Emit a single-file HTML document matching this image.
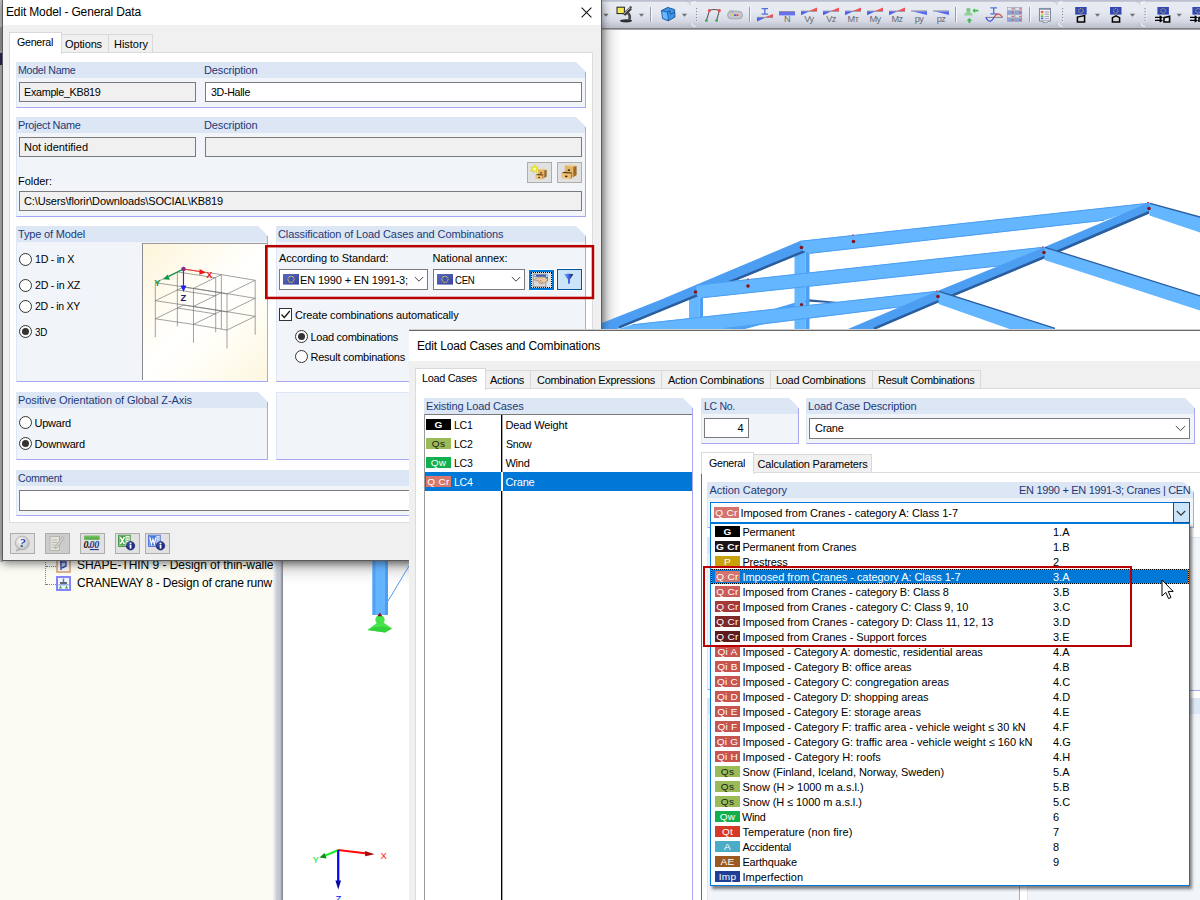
<!DOCTYPE html>
<html><head><meta charset="utf-8"><title>Edit Model</title>
<style>
html,body{margin:0;padding:0;}
body{width:1200px;height:900px;overflow:hidden;position:relative;background:#fff;font-family:"Liberation Sans",sans-serif;font-size:11px;}
.t{position:absolute;white-space:pre;font-family:"Liberation Sans",sans-serif;}
div{box-sizing:content-box}
</style></head><body>
<div style="position:absolute;left:0px;top:0px;width:273px;height:900px;background:#fbfbf4"></div>
<div style="position:absolute;left:0px;top:0px;width:3px;height:562px;background:#b8b8bc"></div>
<div style="position:absolute;left:0px;top:0px;width:2px;height:27px;background:#d0d0d4"></div>
<div style="position:absolute;left:0px;top:27px;width:2px;height:23px;background:#a4a4ac"></div>
<div style="position:absolute;left:0px;top:53px;width:2px;height:12px;background:#2c2c5c"></div>
<div style="position:absolute;left:0px;top:65px;width:2px;height:497px;background:#c4c4c8"></div>
<div style="position:absolute;left:45px;top:558px;width:1px;height:27px;border-left:1px dotted #808080;width:0"></div>
<div style="position:absolute;left:46px;top:566px;width:10px;height:0px;border-top:1px dotted #808080"></div>
<div style="position:absolute;left:46px;top:584px;width:10px;height:0px;border-top:1px dotted #808080"></div>
<div style="position:absolute;left:56px;top:558px;width:11px;height:11px;border:2px solid #dcb48c;background:#f4f4f4"></div>
<svg style="position:absolute;left:58px;top:560px" width="11" height="11" viewBox="0 0 11 11"><path d="M3 1 L3 10 M2 2 L8 2 L8 6 L4 8" stroke="#3848a8" stroke-width="1.4" fill="#c0c8e0"/></svg>
<div style="position:absolute;left:56px;top:576px;width:11px;height:11px;border:2px solid #8484fc;background:#f4f6fc"></div>
<svg style="position:absolute;left:58px;top:578px" width="11" height="11" viewBox="0 0 11 11"><path d="M5.5 0.5V4" stroke="#5878c8" stroke-width="1.5"/><rect x="2" y="4" width="7" height="2.2" fill="#606878"/><rect x="0.5" y="6.2" width="10" height="1.3" fill="#88a8e0"/><path d="M1 10.5 L2.5 7.8 L4 10.5Z M7 10.5 L8.5 7.8 L10 10.5Z" fill="#30a040"/></svg>
<span class="t" style="left:77px;top:557.0px;font-size:12px;line-height:16px;color:#000;font-weight:normal;letter-spacing:-0.045px;width:196px;overflow:hidden;">SHAPE-THIN 9 - Design of thin-walle</span>
<span class="t" style="left:77px;top:575.0px;font-size:12px;line-height:16px;color:#000;font-weight:normal;letter-spacing:-0.208px;">CRANEWAY 8 - Design of crane runw</span>
<div style="position:absolute;left:273px;top:0px;width:10px;height:900px;background:linear-gradient(90deg,#f2f2f0 0,#e2e5ec 18%,#c6cbd7 38%,#bec4d0 72%,#94969c 90%,#7c7c80 100%)"></div>
<div style="position:absolute;left:283px;top:0px;width:130px;height:900px;background:#fff"></div>
<div style="position:absolute;left:283px;top:561px;width:127px;height:24px;background:linear-gradient(180deg,#c4c4c4 0,#e0e0e0 28%,#f4f4f4 62%,#fff 100%)"></div>
<svg style="position:absolute;left:283px;top:555px" width="130" height="345" viewBox="283 555 130 345">
<rect x="372.5" y="555" width="15.5" height="60" fill="#64b4ff"/><rect x="372.5" y="555" width="3" height="60" fill="#50a2f4"/><rect x="385" y="555" width="3" height="60" fill="#4c9ef2"/>
<path d="M388 601 L409 566" stroke="#4c9cf0" stroke-width="1" fill="none"/>
<path d="M367.5 630 L377.5 622.5 L383.5 622.5 L392 628.5 L385 632.6 Z" fill="#48e44c"/>
<path d="M367.5 630 L385 632.6 L392 628.5 L384 626.6 L373 627.2Z" fill="#34d23c"/>
<circle cx="380" cy="619.8" r="4.7" fill="#44e448"/>
<path d="M379.8 612.4 L377.4 616.2 L382.2 616.2Z" fill="#8c1010"/>
<!-- axes -->
<path d="M338 850 L367 853.4" stroke="#ff0808" stroke-width="2"/><path d="M374.6 854.2 L365 851 L365.2 856.2Z" fill="#a80808"/>
<path d="M338.5 850 L325 855.6" stroke="#10f020" stroke-width="2"/><path d="M319.4 857.6 L324.6 853 L326.6 858.4Z" fill="#089010"/>
<path d="M338.2 850 L338.2 881" stroke="#0808ff" stroke-width="2.3"/><path d="M338.2 889.6 L335.4 880.4 L341 880.4Z" fill="#0808a8"/>
</svg>
<span class="t" style="left:380.4px;top:849.0px;font-size:9.5px;line-height:14px;color:#ff1010;font-weight:normal;">X</span>
<span class="t" style="left:312.6px;top:853.0px;font-size:9.5px;line-height:14px;color:#10e820;font-weight:normal;">Y</span>
<span class="t" style="left:335.6px;top:892.2px;font-size:9.5px;line-height:14px;color:#1010ff;font-weight:normal;">Z</span>
<div style="position:absolute;left:600px;top:0px;width:600px;height:28px;background:linear-gradient(180deg,#b8bccb 0,#c4c8d5 5%,#e9ebf3 9%,#e6e9f1 40%,#d6dae5 75%,#b9bdcc 100%)"></div>
<div style="position:absolute;left:600px;top:28px;width:600px;height:1px;background:#7e7e82"></div>
<div style="position:absolute;left:600px;top:29px;width:600px;height:1px;background:#a4a4a8"></div>
<div style="position:absolute;left:600px;top:30px;width:600px;height:299px;background:#fff"></div>
<div style="position:absolute;left:600px;top:30px;width:22px;height:299px;background:linear-gradient(90deg,#8a8a8a 0,#8a8a8a 8%,#c6c6c6 9%,#e2e2e2 35%,#f4f4f4 65%,#fff 100%)"></div>
<svg style="position:absolute;left:600px;top:30px" width="600" height="299" viewBox="600 30 600 299">
<!-- back elements -->
<path d="M775 308.5 L806 299.5 L808 302 L782 311Z" fill="#4c9ef3"/>
<path d="M806 299 L838 302 L838 303.5 L806 301.5Z" fill="#2c5e9e"/>
<path d="M724 329 L760 322 L764 324 L745 329Z" fill="#4c9ef3"/>
<!-- columns -->
<rect x="794.5" y="250" width="11" height="80" fill="#64b6ff"/><rect x="805.5" y="250" width="4" height="80" fill="#4c9ef3"/>
<rect x="689" y="294" width="10.5" height="36" fill="#64b6ff"/><rect x="699.5" y="294" width="3.5" height="36" fill="#4c9ef3"/>
<!-- rafter A -->
<path d="M594 329 L596 325.3 L660 300 L800 241 L806 244 L806 251.5 L620 328 L616 329.5Z" fill="#4c9ef3"/>
<path d="M619 327.4 L806 250.6" stroke="#2c5e9e" stroke-width="2.4" fill="none"/>
<!-- purlins -->
<path d="M800 241 L1148 203 L1150 205 L1104 220.5 L810 253.5 L803 251Z" fill="#64b6ff"/>
<path d="M800 241.3 L1148 203.3" stroke="#4c9ef3" stroke-width="1"/>
<path d="M810 253.3 L1104 220.3" stroke="#4c9ef3" stroke-width="1"/>
<path d="M696 285 L1043 247 L1044 249.5 L1000 266 L702 298 L697 296Z" fill="#64b6ff"/>
<path d="M696 285.3 L1043 247.3" stroke="#4c9ef3" stroke-width="1"/>
<path d="M702 297.8 L1000 265.8" stroke="#4c9ef3" stroke-width="1"/>
<path d="M618 329 L632.5 324.5 L937 291 L938 293.5 L913 305.5 L725 329Z" fill="#64b6ff"/>
<path d="M632.5 324.8 L937 291.3" stroke="#4c9ef3" stroke-width="1"/>
<path d="M725 328.4 L913 305.3" stroke="#4c9ef3" stroke-width="1"/>
<!-- rafter 2 -->
<path d="M848 329 L937.5 291 L1044 247.3 L1149 202.5 L1151 205 L1149 213.5 L1044 258.5 L937.5 302.7 L876 329Z" fill="#4c9ef3"/>
<path d="M874 328.6 L937.5 301.6 L1044 257.2 L1149 212.3" stroke="#2c5e9e" stroke-width="2.6" fill="none"/>
<!-- right slope beams -->
<path d="M1149.5 203 L1200 217 L1200 232.5 L1149.5 215.5Z" fill="#64b6ff"/>
<path d="M1150 203.3 L1200 217" stroke="#2c5e9e" stroke-width="1.3"/>
<path d="M1044.5 247 L1200 296 L1200 310.5 L1044.5 260Z" fill="#64b6ff"/>
<path d="M1045 247.3 L1200 296" stroke="#2c5e9e" stroke-width="1.3"/>
<path d="M938.5 291 L1054.5 328 L1054.5 329.5 L1011 329.5 L938.5 304Z" fill="#64b6ff"/>
<path d="M939 291.3 L1055 328.3" stroke="#2c5e9e" stroke-width="1.3"/>
<!-- nodes -->
<g fill="#8c1018"><circle cx="801.5" cy="247.5" r="1.8"/><circle cx="853.5" cy="241.5" r="1.8"/><circle cx="748" cy="286" r="1.8"/><circle cx="695.5" cy="292" r="1.8"/><circle cx="801.5" cy="304.5" r="1.6"/><circle cx="1149" cy="208.5" r="1.8"/><circle cx="1044" cy="252.5" r="1.8"/><circle cx="938" cy="296.5" r="1.8"/></g>
<g fill="#e03030"><rect x="852" y="234.5" width="2" height="1"/><rect x="747" y="278.5" width="2" height="1"/><rect x="1147" y="202" width="2" height="1"/><rect x="1042" y="246.5" width="2" height="1"/><rect x="936" y="290.5" width="2" height="1"/></g>
</svg>
<svg style="position:absolute;left:600px;top:0" width="600" height="28" viewBox="600 0 600 28"><path d="M603.4 13.8 L608.6 13.8 L606 16.8Z" fill="#6e6e72"/><rect x="617" y="7.2" width="7.4" height="6.4" fill="#f4e858" stroke="#202020" stroke-width="1"/><path d="M622.3 14 L629.4 7.2 L631.8 9.6 L625.4 15.8Z" fill="#3a3a3e"/><path d="M628.2 11.6 Q632.2 14.6 630.8 19.8 L627.8 19.8 Q629.6 15.4 626.4 13.6Z" fill="#4a4a4e"/><ellipse cx="626" cy="20.8" rx="6.2" ry="1.6" fill="#2e2e32"/><rect x="629.4" y="6.4" width="2.6" height="2" transform="rotate(45 630.7 7.4)" fill="#55555a"/><path d="M623.5 14.2 L630 7.8" stroke="#c8c8cc" stroke-width="1"/><path d="M638.9 13.8 L644.1 13.8 L641.5 16.8Z" fill="#6e6e72"/><rect x="650" y="7" width="1" height="15" fill="#9a9ca4"/><rect x="651" y="7" width="1" height="15" fill="#f6f7fa"/><path d="M661.5 10.6 L667.8 7.4 L674.6 9.6 L675 17 L668.4 20.8 L662.6 18.6Z" fill="#3c94e8" stroke="#185090" stroke-width=".9"/><path d="M661.5 10.6 L667.4 12.2 L668.4 20.8 M667.4 12.2 L669.6 10.6 L670.2 14.2 L675 12.4" stroke="#185090" stroke-width=".8" fill="none"/><path d="M662.2 11.4 L667 12.8 L667.8 19.8 L663 18Z" fill="#68b8ff"/><path d="M681.9 13.8 L687.1 13.8 L684.5 16.8Z" fill="#6e6e72"/><path d="M686.5 1.5 Q690.5 1.5 690.5 5 M690.5 23 Q690.5 26.5 686.5 26.5" stroke="#b8bcc8" stroke-width="1" fill="none" opacity=".8"/><path d="M695.5 1.5 Q691.5 1.5 691.5 5 M691.5 23 Q691.5 26.5 695.5 26.5" stroke="#f8f9fc" stroke-width="1" fill="none"/><rect x="696" y="8" width="2" height="2" fill="#f8f8fc"/><rect x="696" y="8" width="1.3" height="1.3" fill="#8c90a0"/><rect x="696" y="11" width="2" height="2" fill="#f8f8fc"/><rect x="696" y="11" width="1.3" height="1.3" fill="#8c90a0"/><rect x="696" y="14" width="2" height="2" fill="#f8f8fc"/><rect x="696" y="14" width="1.3" height="1.3" fill="#8c90a0"/><rect x="696" y="17" width="2" height="2" fill="#f8f8fc"/><rect x="696" y="17" width="1.3" height="1.3" fill="#8c90a0"/><rect x="696" y="20" width="2" height="2" fill="#f8f8fc"/><rect x="696" y="20" width="1.3" height="1.3" fill="#8c90a0"/><path d="M706.4 20.6 L709.4 10.6 Q713 8.6 719.4 10.4 L716.6 20.6" stroke="#5a5a60" stroke-width="1.1" fill="none"/><circle cx="709.4" cy="10.4" r="1.5" fill="#e84848"/><circle cx="719.4" cy="10.4" r="1.5" fill="#e84848"/><rect x="705" y="19.6" width="2.8" height="2" fill="#30b040"/><rect x="715.2" y="19.6" width="2.8" height="2" fill="#30b040"/><rect x="727.6" y="11.2" width="14.8" height="7.6" rx="3.6" fill="#c4c6cc" stroke="#9a9ca4" stroke-width=".8"/><rect x="729" y="10.4" width="5" height="2.4" fill="#b0b2ba"/><rect x="731.6" y="14.4" width="2" height="1.6" fill="#f0d030"/><rect x="734" y="14.4" width="2" height="1.6" fill="#4060e0"/><rect x="736.4" y="14.4" width="2" height="1.6" fill="#e04040"/><rect x="749" y="7" width="1" height="15" fill="#9a9ca4"/><rect x="750" y="7" width="1" height="15" fill="#f6f7fa"/><path d="M761.6 8.6 H768 M761.6 14.2 H768 M764.8 8.6 V14.2" stroke="#5070d8" stroke-width="1.3"/><path d="M757 17.4 L773 17.4" stroke="#888890" stroke-width=".9"/><path d="M765 17.2 L773 14 L773 17.2Z" fill="#f05058"/><path d="M757 17.8 L765 17.8 L757 21.6Z" fill="#5060f0"/><rect x="779" y="11" width="16" height="4.4" fill="#6870f0"/><rect x="779" y="11" width="16" height="1" fill="#9090a0"/><text x="787" y="22.2" text-anchor="middle" font-family="Liberation Sans" font-size="9.2" fill="#666a72" letter-spacing="-0.5">N</text><path d="M801 11.2 L817 11.2" stroke="#808088" stroke-width="1"/><path d="M809 11 L817 7.4 L817 11Z" fill="#f05058"/><path d="M801 11.6 L809 11.6 L801 15.2Z" fill="#5060f0"/><text x="809" y="22.2" text-anchor="middle" font-family="Liberation Sans" font-size="9.2" fill="#666a72" letter-spacing="-0.5">Vy</text><path d="M823 11.2 L839 11.2" stroke="#808088" stroke-width="1"/><path d="M831 11 L839 7.4 L839 11Z" fill="#f05058"/><path d="M823 11.6 L831 11.6 L823 15.2Z" fill="#5060f0"/><text x="831" y="22.2" text-anchor="middle" font-family="Liberation Sans" font-size="9.2" fill="#666a72" letter-spacing="-0.5">Vz</text><path d="M845 11.2 L861 11.2" stroke="#808088" stroke-width="1"/><path d="M853 11 L861 7.4 L861 11Z" fill="#f05058"/><path d="M845 11.6 L853 11.6 L845 15.2Z" fill="#5060f0"/><text x="853" y="22.2" text-anchor="middle" font-family="Liberation Sans" font-size="9.2" fill="#666a72" letter-spacing="-0.5">Mᴛ</text><path d="M867 11.2 L883 11.2" stroke="#808088" stroke-width="1"/><path d="M875 11 L883 7.4 L883 11Z" fill="#f05058"/><path d="M867 11.6 L875 11.6 L867 15.2Z" fill="#5060f0"/><text x="875" y="22.2" text-anchor="middle" font-family="Liberation Sans" font-size="9.2" fill="#666a72" letter-spacing="-0.5">My</text><path d="M889 11.2 L905 11.2" stroke="#808088" stroke-width="1"/><path d="M897 11 L905 7.4 L905 11Z" fill="#f05058"/><path d="M889 11.6 L897 11.6 L889 15.2Z" fill="#5060f0"/><text x="897" y="22.2" text-anchor="middle" font-family="Liberation Sans" font-size="9.2" fill="#666a72" letter-spacing="-0.5">Mz</text><path d="M911 11 L927 11" stroke="#808088" stroke-width="1"/><path d="M913 11.6 L927 11.6 L927 15Z" fill="#5868f0"/><text x="919" y="22.2" text-anchor="middle" font-family="Liberation Sans" font-size="9.2" fill="#666a72" letter-spacing="-0.5">py</text><path d="M933 11 L949 11" stroke="#808088" stroke-width="1"/><path d="M935 11.6 L949 11.6 L949 15Z" fill="#5868f0"/><text x="941" y="22.2" text-anchor="middle" font-family="Liberation Sans" font-size="9.2" fill="#666a72" letter-spacing="-0.5">pz</text><rect x="955" y="7" width="1" height="15" fill="#9a9ca4"/><rect x="956" y="7" width="1" height="15" fill="#f6f7fa"/><circle cx="968.4" cy="10" r="2.2" fill="#80c888"/><path d="M964.2 15.6 Q964.4 11.8 968.4 12 Q972.4 11.8 972.6 15.6Z" fill="#90d098"/><path d="M972.4 10.6 L975 8.2 L975 9.8 L978.4 9.8 L978.4 11.6 L975 11.6 L975 13.2Z" fill="#40b850"/><path d="M969.4 18 L972.2 20.8 L970.4 20.8 L970.4 23 L968.4 23 L968.4 20.8 L966.6 20.8Z" fill="#40b850"/><path d="M990.4 7.8 H997 M990.4 13.8 H997 M993.7 7.8 V13.8" stroke="#5070d8" stroke-width="1.3"/><path d="M985.6 17.4 H1002.6" stroke="#70707a" stroke-width=".9"/><path d="M985.8 17.6 Q989.8 25 994 17.6" stroke="#3050e0" stroke-width="1.1" fill="none"/><path d="M994 17.2 Q998.2 10.6 1002.4 17.2" stroke="#e03838" stroke-width="1.1" fill="none"/><rect x="1007.4" y="7.4" width="6.8" height="3" fill="#dfe3ee" stroke="#8a8e9c" stroke-width=".5"/><rect x="1011.5" y="8.4" width="2.4" height="1" fill="#e05050"/><rect x="1015.0" y="7.4" width="6.8" height="3" fill="#dfe3ee" stroke="#8a8e9c" stroke-width=".5"/><rect x="1019.1" y="8.4" width="2.4" height="1" fill="#e05050"/><rect x="1007.4" y="11.100000000000001" width="6.8" height="3" fill="#88a4e8" stroke="#8a8e9c" stroke-width=".5"/><rect x="1011.5" y="12.100000000000001" width="2.4" height="1" fill="#e05050"/><rect x="1015.0" y="11.100000000000001" width="6.8" height="3" fill="#88a4e8" stroke="#8a8e9c" stroke-width=".5"/><rect x="1019.1" y="12.100000000000001" width="2.4" height="1" fill="#e05050"/><rect x="1007.4" y="14.8" width="6.8" height="3" fill="#dfe3ee" stroke="#8a8e9c" stroke-width=".5"/><rect x="1011.5" y="15.8" width="2.4" height="1" fill="#e05050"/><rect x="1015.0" y="14.8" width="6.8" height="3" fill="#dfe3ee" stroke="#8a8e9c" stroke-width=".5"/><rect x="1019.1" y="15.8" width="2.4" height="1" fill="#e05050"/><rect x="1007.4" y="18.5" width="6.8" height="3" fill="#88a4e8" stroke="#8a8e9c" stroke-width=".5"/><rect x="1011.5" y="19.5" width="2.4" height="1" fill="#e05050"/><rect x="1015.0" y="18.5" width="6.8" height="3" fill="#88a4e8" stroke="#8a8e9c" stroke-width=".5"/><rect x="1019.1" y="19.5" width="2.4" height="1" fill="#e05050"/><rect x="1029" y="7" width="1" height="15" fill="#9a9ca4"/><rect x="1030" y="7" width="1" height="15" fill="#f6f7fa"/><rect x="1039.4" y="8.4" width="11" height="12.6" fill="#f2f3f8" stroke="#70788c" stroke-width=".9"/><rect x="1039.4" y="8" width="11" height="1.8" fill="#8890a8"/><rect x="1040.8" y="11" width="2.6" height="1.8" fill="#e05050"/><rect x="1040.8" y="13.2" width="2.6" height="1.8" fill="#e8d040"/><rect x="1040.8" y="15.4" width="2.6" height="1.8" fill="#50b850"/><rect x="1040.8" y="17.6" width="2.6" height="1.8" fill="#5070e0"/><path d="M1044.6 12 H1049 M1044.6 14.2 H1049 M1044.6 16.4 H1049 M1044.6 18.6 H1049" stroke="#8088a0" stroke-width=".8"/><path d="M1043 21 L1043 22.6 L1047 22.6 L1049 21" fill="#d8dae4" stroke="#70788c" stroke-width=".6"/><path d="M1053.5 1.5 Q1057.5 1.5 1057.5 5 M1057.5 23 Q1057.5 26.5 1053.5 26.5" stroke="#b8bcc8" stroke-width="1" fill="none" opacity=".8"/><path d="M1062.5 1.5 Q1058.5 1.5 1058.5 5 M1058.5 23 Q1058.5 26.5 1062.5 26.5" stroke="#f8f9fc" stroke-width="1" fill="none"/><rect x="1062" y="8" width="2" height="2" fill="#f8f8fc"/><rect x="1062" y="8" width="1.3" height="1.3" fill="#8c90a0"/><rect x="1062" y="11" width="2" height="2" fill="#f8f8fc"/><rect x="1062" y="11" width="1.3" height="1.3" fill="#8c90a0"/><rect x="1062" y="14" width="2" height="2" fill="#f8f8fc"/><rect x="1062" y="14" width="1.3" height="1.3" fill="#8c90a0"/><rect x="1062" y="17" width="2" height="2" fill="#f8f8fc"/><rect x="1062" y="17" width="1.3" height="1.3" fill="#8c90a0"/><rect x="1062" y="20" width="2" height="2" fill="#f8f8fc"/><rect x="1062" y="20" width="1.3" height="1.3" fill="#8c90a0"/><rect x="1075.2" y="7" width="11.5" height="7.6" fill="#3248b4"/><circle cx="1080.95" cy="10.8" r="2.3" fill="none" stroke="#e8d048" stroke-width=".9" stroke-dasharray="1 .8"/><path d="M1077.4 22 L1077.4 17 L1084.6 15.6 L1084.6 22Z" fill="#d8d8dc" stroke="#000" stroke-width="1.5"/><path d="M1094.9 13.8 L1100.1 13.8 L1097.5 16.8Z" fill="#6e6e72"/><rect x="1110" y="7" width="11.5" height="7.6" fill="#3248b4"/><circle cx="1115.75" cy="10.8" r="2.3" fill="none" stroke="#e8d048" stroke-width=".9" stroke-dasharray="1 .8"/><path d="M1112.4 22 L1112.4 17.6 L1116 15.8 L1119.6 17.6 L1119.6 22Z" fill="#d8d8dc" stroke="#000" stroke-width="1.5"/><path d="M1129.9 13.8 L1135.1 13.8 L1132.5 16.8Z" fill="#6e6e72"/><path d="M1136 1.5 Q1140 1.5 1140 5 M1140 23 Q1140 26.5 1136 26.5" stroke="#b8bcc8" stroke-width="1" fill="none" opacity=".8"/><path d="M1145 1.5 Q1141 1.5 1141 5 M1141 23 Q1141 26.5 1145 26.5" stroke="#f8f9fc" stroke-width="1" fill="none"/><rect x="1144.4" y="8" width="2" height="2" fill="#f8f8fc"/><rect x="1144.4" y="8" width="1.3" height="1.3" fill="#8c90a0"/><rect x="1144.4" y="11" width="2" height="2" fill="#f8f8fc"/><rect x="1144.4" y="11" width="1.3" height="1.3" fill="#8c90a0"/><rect x="1144.4" y="14" width="2" height="2" fill="#f8f8fc"/><rect x="1144.4" y="14" width="1.3" height="1.3" fill="#8c90a0"/><rect x="1144.4" y="17" width="2" height="2" fill="#f8f8fc"/><rect x="1144.4" y="17" width="1.3" height="1.3" fill="#8c90a0"/><rect x="1144.4" y="20" width="2" height="2" fill="#f8f8fc"/><rect x="1144.4" y="20" width="1.3" height="1.3" fill="#8c90a0"/><rect x="1157.4" y="7" width="11.5" height="7.6" fill="#3248b4"/><circle cx="1163.15" cy="10.8" r="2.3" fill="none" stroke="#e8d048" stroke-width=".9" stroke-dasharray="1 .8"/><path d="M1155 17.4 H1161 M1155 20.4 H1161 M1159.6 15.8 L1162 17.4 L1159.6 19 M1159.6 18.8 L1162 20.4 L1159.6 22" stroke="#000" stroke-width="1.1" fill="none"/><path d="M1164 22 L1164 17.6 L1169.6 16.2 L1169.6 22Z" fill="#e8e8ec" stroke="#000" stroke-width="1.6"/><path d="M1176.6000000000001 13.8 L1181.8 13.8 L1179.2 16.8Z" fill="#6e6e72"/><rect x="1192.4" y="7" width="11.5" height="7.6" fill="#3248b4"/><circle cx="1198.15" cy="10.8" r="2.3" fill="none" stroke="#e8d048" stroke-width=".9" stroke-dasharray="1 .8"/><path d="M1190 17.4 H1196 M1190 20.4 H1196 M1194.6 15.8 L1197 17.4 L1194.6 19 M1194.6 18.8 L1197 20.4 L1194.6 22" stroke="#000" stroke-width="1.1" fill="none"/><path d="M1199 22 L1199 17.6 L1204 16.2" fill="none" stroke="#000" stroke-width="1.6"/></svg>
<div style="position:absolute;left:3px;top:0px;width:598px;height:560px;background:#f0f0f0;box-shadow:0 2px 9px 1px rgba(0,0,0,.55)"></div>
<div style="position:absolute;left:2px;top:0px;width:1px;height:561px;background:#5a5a5a"></div>
<div style="position:absolute;left:2px;top:560px;width:600px;height:1px;background:#5a5a5a"></div>
<div style="position:absolute;left:601px;top:0px;width:1px;height:561px;background:#5e5e5e"></div>
<div style="position:absolute;left:3px;top:0px;width:598px;height:25px;background:#fff"></div>
<span class="t" style="left:6px;top:4.0px;font-size:12px;line-height:16px;color:#000;font-weight:normal;letter-spacing:-0.149px;">Edit Model - General Data</span>
<svg style="position:absolute;left:580.5px;top:6.5px" width="11" height="11" viewBox="0 0 11 11"><path d="M0.6 0.6 L10.4 10.4 M10.4 0.6 L0.6 10.4" stroke="#111" stroke-width="1.05"/></svg>
<div style="position:absolute;left:9px;top:52px;width:582px;height:469px;background:#fff;border:1px solid #dcdcdc"></div>
<div style="position:absolute;left:61px;top:34px;width:46px;height:17px;background:#f0f0f0;border:1px solid #d9d9d9;border-bottom:none"></div>
<div style="position:absolute;left:108px;top:34px;width:43px;height:17px;background:#f0f0f0;border:1px solid #d9d9d9;border-bottom:none"></div>
<div style="position:absolute;left:9px;top:32px;width:51px;height:21px;background:#fff;border:1px solid #d9d9d9;border-bottom:none"></div>
<span class="t" style="left:17px;top:34.7px;font-size:11px;line-height:14px;color:#000;font-weight:normal;letter-spacing:-0.300px;transform:scaleX(0.9719);transform-origin:0 50%;">General</span>
<span class="t" style="left:65px;top:37.0px;font-size:11px;line-height:14px;color:#000;font-weight:normal;letter-spacing:-0.132px;">Options</span>
<span class="t" style="left:114px;top:37.0px;font-size:11px;line-height:14px;color:#000;font-weight:normal;letter-spacing:-0.033px;">History</span>
<div style="position:absolute;left:16px;top:62px;width:570px;height:16px;background:#dce6f4;clip-path:polygon(0 0,560px 0,570px 10px,570px 16px,0 16px)"></div>
<div style="position:absolute;left:16px;top:78px;width:568px;height:29px;background:#f1f5fa;border-left:1px solid #dce6f4;border-right:1px solid #a8a8f2;border-bottom:1px solid #a8a8f2"></div>
<div style="position:absolute;left:585px;top:72px;width:1px;height:6px;background:#a8a8f2"></div>
<span class="t" style="left:18px;top:63.0px;font-size:11px;line-height:14px;color:#1c3a78;font-weight:normal;letter-spacing:-0.300px;transform:scaleX(0.9687);transform-origin:0 50%;">Model Name</span>
<span class="t" style="left:204px;top:63.0px;font-size:11px;line-height:14px;color:#1c3a78;font-weight:normal;letter-spacing:-0.139px;">Description</span>
<div style="position:absolute;left:19px;top:82px;width:175px;height:18px;background:#f0f0f0;border:1px solid #7a7a7a"></div>
<div style="position:absolute;left:205px;top:82px;width:375px;height:18px;background:#fff;border:1px solid #7a7a7a"></div>
<span class="t" style="left:24px;top:85.0px;font-size:11px;line-height:14px;color:#000;font-weight:normal;letter-spacing:-0.300px;transform:scaleX(0.9801);transform-origin:0 50%;">Example_KB819</span>
<span class="t" style="left:211px;top:85.0px;font-size:11px;line-height:14px;color:#000;font-weight:normal;letter-spacing:-0.300px;transform:scaleX(0.9654);transform-origin:0 50%;">3D-Halle</span>
<div style="position:absolute;left:16px;top:117px;width:570px;height:16px;background:#dce6f4;clip-path:polygon(0 0,560px 0,570px 10px,570px 16px,0 16px)"></div>
<div style="position:absolute;left:16px;top:133px;width:568px;height:83px;background:#f1f5fa;border-left:1px solid #dce6f4;border-right:1px solid #a8a8f2;border-bottom:1px solid #a8a8f2"></div>
<div style="position:absolute;left:585px;top:127px;width:1px;height:6px;background:#a8a8f2"></div>
<span class="t" style="left:18px;top:118.0px;font-size:11px;line-height:14px;color:#1c3a78;font-weight:normal;letter-spacing:-0.300px;transform:scaleX(0.9914);transform-origin:0 50%;">Project Name</span>
<span class="t" style="left:204px;top:118.0px;font-size:11px;line-height:14px;color:#1c3a78;font-weight:normal;letter-spacing:-0.139px;">Description</span>
<div style="position:absolute;left:19px;top:137px;width:175px;height:18px;background:#f0f0f0;border:1px solid #7a7a7a"></div>
<div style="position:absolute;left:205px;top:137px;width:375px;height:18px;background:#f0f0f0;border:1px solid #7a7a7a"></div>
<span class="t" style="left:24px;top:140.0px;font-size:11px;line-height:14px;color:#000;font-weight:normal;letter-spacing:-0.016px;">Not identified</span>
<span class="t" style="left:18px;top:174.0px;font-size:11px;line-height:14px;color:#000;font-weight:normal;letter-spacing:-0.036px;">Folder:</span>
<div style="position:absolute;left:527px;top:162px;width:23px;height:19px;background:#e1e1e1;border:1px solid #adadad"></div>
<div style="position:absolute;left:557px;top:162px;width:23px;height:19px;background:#e1e1e1;border:1px solid #adadad"></div>
<div style="position:absolute;left:19px;top:191px;width:561px;height:18px;background:#f0f0f0;border:1px solid #7a7a7a"></div>
<span class="t" style="left:24px;top:194.0px;font-size:11px;line-height:14px;color:#000;font-weight:normal;letter-spacing:-0.137px;">C:\Users\florir\Downloads\SOCIAL\KB819</span>
<div style="position:absolute;left:16px;top:226px;width:252px;height:16px;background:#dce6f4;clip-path:polygon(0 0,242px 0,252px 10px,252px 16px,0 16px)"></div>
<div style="position:absolute;left:16px;top:242px;width:250px;height:139px;background:#f1f5fa;border-left:1px solid #dce6f4;border-right:1px solid #a8a8f2;border-bottom:1px solid #a8a8f2"></div>
<div style="position:absolute;left:267px;top:236px;width:1px;height:6px;background:#a8a8f2"></div>
<span class="t" style="left:18px;top:227.0px;font-size:11px;line-height:14px;color:#1c3a78;font-weight:normal;letter-spacing:-0.161px;">Type of Model</span>
<div style="position:absolute;left:18.5px;top:252.5px;width:12px;height:12px;border-radius:50%;border:1px solid #333;background:#fff;box-sizing:content-box;width:11px;height:11px"></div>
<span class="t" style="left:35px;top:252.0px;font-size:11px;line-height:14px;color:#000;font-weight:normal;letter-spacing:-0.300px;transform:scaleX(0.9726);transform-origin:0 50%;">1D - in X</span>
<div style="position:absolute;left:18.5px;top:278.5px;width:12px;height:12px;border-radius:50%;border:1px solid #333;background:#fff;box-sizing:content-box;width:11px;height:11px"></div>
<span class="t" style="left:35px;top:278.0px;font-size:11px;line-height:14px;color:#000;font-weight:normal;letter-spacing:-0.300px;transform:scaleX(0.9674);transform-origin:0 50%;">2D - in XZ</span>
<div style="position:absolute;left:18.5px;top:299.5px;width:12px;height:12px;border-radius:50%;border:1px solid #333;background:#fff;box-sizing:content-box;width:11px;height:11px"></div>
<span class="t" style="left:35px;top:299.0px;font-size:11px;line-height:14px;color:#000;font-weight:normal;letter-spacing:-0.300px;transform:scaleX(0.9546);transform-origin:0 50%;">2D - in XY</span>
<div style="position:absolute;left:18.5px;top:325.0px;width:12px;height:12px;border-radius:50%;border:1px solid #333;background:#fff;box-sizing:content-box;width:11px;height:11px"></div>
<div style="position:absolute;left:21.5px;top:328.0px;width:7px;height:7px;border-radius:50%;background:#333"></div>
<span class="t" style="left:35px;top:324.5px;font-size:11px;line-height:14px;color:#000;font-weight:normal;letter-spacing:-0.300px;transform:scaleX(0.8914);transform-origin:0 50%;">3D</span>
<div style="position:absolute;left:142px;top:243px;width:124px;height:136px;background:linear-gradient(135deg,#fdf5da 0%,#fffcf0 30%,#ffffff 50%,#fffdf4 70%,#fdf7e0 100%);border-left:1px solid #8a8a8a;border-top:1px solid #9a9a9a"></div>
<div style="position:absolute;left:16px;top:392px;width:252px;height:16px;background:#dce6f4;clip-path:polygon(0 0,242px 0,252px 10px,252px 16px,0 16px)"></div>
<div style="position:absolute;left:16px;top:408px;width:250px;height:51px;background:#f1f5fa;border-left:1px solid #dce6f4;border-right:1px solid #a8a8f2;border-bottom:1px solid #a8a8f2"></div>
<div style="position:absolute;left:267px;top:402px;width:1px;height:6px;background:#a8a8f2"></div>
<span class="t" style="left:18px;top:393.0px;font-size:11px;line-height:14px;color:#1c3a78;font-weight:normal;letter-spacing:-0.073px;">Positive Orientation of Global Z-Axis</span>
<div style="position:absolute;left:18.5px;top:416.0px;width:12px;height:12px;border-radius:50%;border:1px solid #333;background:#fff;box-sizing:content-box;width:11px;height:11px"></div>
<span class="t" style="left:34.5px;top:416.0px;font-size:11px;line-height:14px;color:#000;font-weight:normal;letter-spacing:-0.234px;">Upward</span>
<div style="position:absolute;left:18.5px;top:437.0px;width:12px;height:12px;border-radius:50%;border:1px solid #333;background:#fff;box-sizing:content-box;width:11px;height:11px"></div>
<div style="position:absolute;left:21.5px;top:440.0px;width:7px;height:7px;border-radius:50%;background:#333"></div>
<span class="t" style="left:34.5px;top:437.0px;font-size:11px;line-height:14px;color:#000;font-weight:normal;letter-spacing:-0.184px;">Downward</span>
<div style="position:absolute;left:276px;top:226px;width:310px;height:16px;background:#dce6f4;clip-path:polygon(0 0,300px 0,310px 10px,310px 16px,0 16px)"></div>
<div style="position:absolute;left:276px;top:242px;width:308px;height:139px;background:#f1f5fa;border-left:1px solid #dce6f4;border-right:1px solid #a8a8f2;border-bottom:1px solid #a8a8f2"></div>
<div style="position:absolute;left:585px;top:236px;width:1px;height:6px;background:#a8a8f2"></div>
<span class="t" style="left:278px;top:227.0px;font-size:11px;line-height:14px;color:#1c3a78;font-weight:normal;letter-spacing:-0.112px;">Classification of Load Cases and Combinations</span>
<span class="t" style="left:279px;top:251.0px;font-size:11px;line-height:14px;color:#000;font-weight:normal;letter-spacing:-0.109px;">According to Standard:</span>
<span class="t" style="left:432.5px;top:251.0px;font-size:11px;line-height:14px;color:#000;font-weight:normal;letter-spacing:-0.097px;">National annex:</span>
<div style="position:absolute;left:279px;top:269px;width:147px;height:19px;background:#fff;border:1px solid #7a7a7a"></div>
<div style="position:absolute;left:433px;top:269px;width:90px;height:19px;background:#fff;border:1px solid #7a7a7a"></div>
<span class="t" style="left:300px;top:273.0px;font-size:11px;line-height:14px;color:#000;font-weight:normal;letter-spacing:-0.150px;">EN 1990 + EN 1991-3;</span>
<span class="t" style="left:454.5px;top:273.0px;font-size:11px;line-height:14px;color:#000;font-weight:normal;letter-spacing:-0.300px;transform:scaleX(0.8731);transform-origin:0 50%;">CEN</span>
<svg style="position:absolute;left:283px;top:274.2px" width="16" height="10.6" viewBox="0 0 16 10.6"><defs><linearGradient id="eg283" x1="0" y1="0" x2="1" y2="1"><stop offset="0" stop-color="#5868c0"/><stop offset="1" stop-color="#3844a0"/></linearGradient></defs><rect width="16" height="10.6" fill="url(#eg283)"/><circle cx="11.10" cy="5.30" r=".55" fill="#f4dc48"/><circle cx="10.68" cy="6.85" r=".55" fill="#f4dc48"/><circle cx="9.55" cy="7.98" r=".55" fill="#f4dc48"/><circle cx="8.00" cy="8.40" r=".55" fill="#f4dc48"/><circle cx="6.45" cy="7.98" r=".55" fill="#f4dc48"/><circle cx="5.32" cy="6.85" r=".55" fill="#f4dc48"/><circle cx="4.90" cy="5.30" r=".55" fill="#f4dc48"/><circle cx="5.32" cy="3.75" r=".55" fill="#f4dc48"/><circle cx="6.45" cy="2.62" r=".55" fill="#f4dc48"/><circle cx="8.00" cy="2.20" r=".55" fill="#f4dc48"/><circle cx="9.55" cy="2.62" r=".55" fill="#f4dc48"/><circle cx="10.68" cy="3.75" r=".55" fill="#f4dc48"/></svg>
<svg style="position:absolute;left:437px;top:274.2px" width="16" height="10.6" viewBox="0 0 16 10.6"><defs><linearGradient id="eg437" x1="0" y1="0" x2="1" y2="1"><stop offset="0" stop-color="#5868c0"/><stop offset="1" stop-color="#3844a0"/></linearGradient></defs><rect width="16" height="10.6" fill="url(#eg437)"/><circle cx="11.10" cy="5.30" r=".55" fill="#f4dc48"/><circle cx="10.68" cy="6.85" r=".55" fill="#f4dc48"/><circle cx="9.55" cy="7.98" r=".55" fill="#f4dc48"/><circle cx="8.00" cy="8.40" r=".55" fill="#f4dc48"/><circle cx="6.45" cy="7.98" r=".55" fill="#f4dc48"/><circle cx="5.32" cy="6.85" r=".55" fill="#f4dc48"/><circle cx="4.90" cy="5.30" r=".55" fill="#f4dc48"/><circle cx="5.32" cy="3.75" r=".55" fill="#f4dc48"/><circle cx="6.45" cy="2.62" r=".55" fill="#f4dc48"/><circle cx="8.00" cy="2.20" r=".55" fill="#f4dc48"/><circle cx="9.55" cy="2.62" r=".55" fill="#f4dc48"/><circle cx="10.68" cy="3.75" r=".55" fill="#f4dc48"/></svg>
<svg style="position:absolute;left:414px;top:276px" width="10" height="7" viewBox="0 0 10 7"><path d="M0.8 1 L5 5.2 L9.2 1" stroke="#444" stroke-width="1" fill="none"/></svg>
<svg style="position:absolute;left:511px;top:276px" width="10" height="7" viewBox="0 0 10 7"><path d="M0.8 1 L5 5.2 L9.2 1" stroke="#444" stroke-width="1" fill="none"/></svg>
<div style="position:absolute;left:529px;top:270px;width:21px;height:16px;background:#e1e1e1;border:2px solid #0078d7;box-shadow:0 0 0 1px #fff"></div>
<div style="position:absolute;left:531px;top:272px;width:19px;height:14px;border:1px dotted #000"></div>
<div style="position:absolute;left:557px;top:269px;width:23px;height:19px;background:#cce4f7;border:1px solid #005499;box-shadow:0 0 0 1px #fff"></div>
<div style="position:absolute;left:279px;top:308px;width:11px;height:11px;border:1px solid #333;background:#fff"></div>
<svg style="position:absolute;left:280px;top:309px" width="11" height="11" viewBox="0 0 11 11"><path d="M1.5 5.5 L4.3 8.5 L9.8 2" stroke="#111" stroke-width="1.2" fill="none"/></svg>
<span class="t" style="left:295px;top:308.0px;font-size:11px;line-height:14px;color:#000;font-weight:normal;letter-spacing:-0.141px;">Create combinations automatically</span>
<div style="position:absolute;left:295.0px;top:330.0px;width:12px;height:12px;border-radius:50%;border:1px solid #333;background:#fff;box-sizing:content-box;width:11px;height:11px"></div>
<div style="position:absolute;left:298.0px;top:333.0px;width:7px;height:7px;border-radius:50%;background:#333"></div>
<span class="t" style="left:310.5px;top:330.0px;font-size:11px;line-height:14px;color:#000;font-weight:normal;letter-spacing:-0.285px;">Load combinations</span>
<div style="position:absolute;left:295.0px;top:350.0px;width:12px;height:12px;border-radius:50%;border:1px solid #333;background:#fff;box-sizing:content-box;width:11px;height:11px"></div>
<span class="t" style="left:310.5px;top:350.0px;font-size:11px;line-height:14px;color:#000;font-weight:normal;letter-spacing:-0.240px;">Result combinations</span>
<div style="position:absolute;left:276px;top:392px;width:308px;height:66px;background:#f1f5fa;border-left:1px solid #dce6f4;border-top:1px solid #dce6f4;border-right:1px solid #a8a8f2;border-bottom:1px solid #a8a8f2"></div>
<div style="position:absolute;left:16px;top:470px;width:570px;height:16px;background:#dce6f4;clip-path:polygon(0 0,560px 0,570px 10px,570px 16px,0 16px)"></div>
<div style="position:absolute;left:16px;top:486px;width:568px;height:29px;background:#f1f5fa;border-left:1px solid #dce6f4;border-right:1px solid #a8a8f2;border-bottom:1px solid #a8a8f2"></div>
<div style="position:absolute;left:585px;top:480px;width:1px;height:6px;background:#a8a8f2"></div>
<span class="t" style="left:18px;top:471.0px;font-size:11px;line-height:14px;color:#1c3a78;font-weight:normal;letter-spacing:-0.300px;transform:scaleX(0.9652);transform-origin:0 50%;">Comment</span>
<div style="position:absolute;left:19px;top:490px;width:561px;height:19px;background:#fff;border:1px solid #7a7a7a"></div>
<div style="position:absolute;left:10px;top:533px;width:23px;height:19px;background:#e1e1e1;border:1px solid #adadad"></div>
<div style="position:absolute;left:45px;top:533px;width:23px;height:19px;background:#cccccc;border:1px solid #adadad"></div>
<div style="position:absolute;left:80px;top:533px;width:23px;height:19px;background:#e1e1e1;border:1px solid #adadad"></div>
<div style="position:absolute;left:115px;top:533px;width:23px;height:19px;background:#e1e1e1;border:1px solid #adadad"></div>
<div style="position:absolute;left:145px;top:533px;width:23px;height:19px;background:#e1e1e1;border:1px solid #adadad"></div>
<svg style="position:absolute;left:260px;top:240px" width="340" height="65" viewBox="260 240 340 65"><rect x="266.25" y="246.2" width="326.7" height="51.75" fill="none" stroke="#b80000" stroke-width="2.5"/></svg>
<svg style="position:absolute;left:140px;top:240px" width="130" height="145" viewBox="0 0 807 900">
<path d="M95 265 L332 300 M332 300 L540 335 M270 180 L505 215 M505 215 L715 250 M95 265 L270 180 M332 300 L505 215 M540 335 L715 250 M232 198 L470 235 M95 377 L332 412 M332 412 L540 447 M270 292 L505 327 M505 327 L715 362 M95 377 L270 292 M332 412 L505 327 M540 447 L715 362 M232 310 L470 347 M95 489 L332 524 M332 524 L540 559 M270 404 L505 439 M505 439 L715 474 M95 489 L270 404 M332 524 L505 439 M540 559 L715 474 M232 422 L470 459 M505 215 L505 553 M715 250 L715 588 M95 265 L95 603 M332 300 L332 638 M540 335 L540 673 M232 198 L232 536 M470 235 L470 573" stroke="#6e6e6e" stroke-width="5" fill="none" stroke-opacity=".8"/>
<path d="M270 180 L380 197" stroke="#ff3030" stroke-width="7"/><path d="M410 202 L370 180 L368 216Z" fill="#f01818"/>
<path d="M270 180 L178 226" stroke="#109848" stroke-width="8"/><path d="M142 244 L172 214 L186 246Z" fill="#109848"/>
<path d="M270 180 L270 285" stroke="#2828ff" stroke-width="7"/><path d="M270 322 L252 282 L288 282Z" fill="#2020f0"/>
<circle cx="270" cy="180" r="14" fill="#883088"/>
<text x="412" y="233" font-family="Liberation Sans" font-weight="bold" font-size="58" fill="#f01818">X</text>
<text x="88" y="283" font-family="Liberation Sans" font-weight="bold" font-size="58" fill="#109848">Y</text>
<text x="252" y="377" font-family="Liberation Sans" font-weight="bold" font-size="58" fill="#201868">Z</text>
</svg>
<svg style="position:absolute;left:527px;top:162px" width="25" height="21" viewBox="0 0 25 21"><path d="M10.964 7.4799999999999995 L16.564 6.6 L19.7 7.699999999999999 L14.1 8.8Z" fill="#f0cc8c"/>
<path d="M10.964 7.4799999999999995 L17.235999999999997 8.36 L17.235999999999997 16.06 L10.964 15.18Z" fill="#e6b566"/>
<path d="M17.235999999999997 8.36 L19.7 7.699999999999999 L19.7 14.52 L17.235999999999997 16.06Z" fill="#9a6a26"/>
<path d="M8.5 12.98 L15.443999999999999 13.42 L15.443999999999999 17.6 L8.5 16.939999999999998Z" fill="#eec27a"/>
<path d="M8.5 12.98 L10.74 12.1 L16.34 12.54 L15.443999999999999 13.42Z" fill="#5a3a10"/>
<path d="M15.443999999999999 13.42 L16.34 12.54 L16.34 16.5 L15.443999999999999 17.6Z" fill="#b07c30"/>
<rect x="11.3" y="14.959999999999999" width="1.568" height="1.1" fill="#2a1a08"/>
<rect x="13.204" y="10.34" width="1.568" height="1.1" fill="#2a1a08"/><path d="M7.6 2.6 L8.4 5.4 L10.9 4.2 L9.5 6.6 L12 7.6 L9.3 8.2 L10 10.9 L7.8 9 L6.2 11.3 L6.2 8.5 L3.4 8.9 L5.5 7 L3.6 5 L6.4 5.5Z" fill="#f0f020" stroke="#c8c800" stroke-width=".4"/><circle cx="7.6" cy="7" r="1.2" fill="#ffffc0"/></svg>
<svg style="position:absolute;left:557px;top:162px" width="25" height="21" viewBox="0 0 25 21"><path d="M7.744 3.584 L15.344 2.4 L19.6 3.88 L12.0 5.36Z" fill="#f0cc8c"/>
<path d="M7.744 3.584 L16.256 4.768000000000001 L16.256 15.128 L7.744 13.944Z" fill="#e6b566"/>
<path d="M16.256 4.768000000000001 L19.6 3.88 L19.6 13.056000000000001 L16.256 15.128Z" fill="#9a6a26"/>
<path d="M4.4 10.984 L13.824 11.576 L13.824 17.2 L4.4 16.311999999999998Z" fill="#eec27a"/>
<path d="M4.4 10.984 L7.44 9.8 L15.04 10.392000000000001 L13.824 11.576Z" fill="#5a3a10"/>
<path d="M13.824 11.576 L15.04 10.392000000000001 L15.04 15.72 L13.824 17.2Z" fill="#b07c30"/>
<rect x="8.2" y="13.648000000000001" width="2.128" height="1.4800000000000002" fill="#2a1a08"/>
<rect x="10.783999999999999" y="7.432" width="2.128" height="1.4800000000000002" fill="#2a1a08"/></svg>
<svg style="position:absolute;left:529px;top:270px" width="25" height="20" viewBox="0 0 25 20"><rect x="4.2" y="4.2" width="12.6" height="12.6" fill="#d8d8d8" stroke="#8a8a8a" stroke-width=".8"/>
<rect x="4.8" y="4.7" width="11.4" height="2" fill="#3858b8"/><rect x="5.2" y="5" width="1.8" height="1.2" fill="#e8e8f0"/>
<rect x="16.2" y="4.6" width="2.6" height="6.6" fill="#4068c8"/><rect x="17" y="5" width="1.6" height="2" fill="#a8d0f8"/>
<path d="M5.6 9.4 C7.5 7.8 10 7.2 12.5 7 C15 6.8 17.8 7.4 18.4 9.2 C18.8 10.6 17.6 12 15.6 12.6 L13.2 13.6 C12 14.2 10.4 13.8 9.8 12.6 L9.2 10.8 L6.2 10.4 C5.4 10.3 5.2 9.8 5.6 9.4Z" fill="#e8c8a4" stroke="#8a6848" stroke-width=".5"/>
<path d="M10.2 11.2 L12 10.2 M11 12.6 L12.8 11.4 M12.4 13.4 L14 12.2" stroke="#8a6848" stroke-width=".5"/></svg>
<svg style="position:absolute;left:557px;top:269px" width="25" height="21" viewBox="0 0 25 21"><defs><linearGradient id="fg" x1="0" x2="1"><stop offset="0" stop-color="#78b0ff"/><stop offset=".55" stop-color="#3860e0"/><stop offset="1" stop-color="#101838"/></linearGradient></defs>
<path d="M7.2 5.4 C9 4.6 14.4 4.6 16.2 5.4 L12.9 10.4 L12.9 14.2 L11 15 L11 10.4Z" fill="url(#fg)"/></svg>
<svg style="position:absolute;left:10px;top:533px" width="25" height="21" viewBox="0 0 25 21"><defs><radialGradient id="bg1" cx=".4" cy=".35" r=".7"><stop offset="0" stop-color="#fff"/><stop offset="1" stop-color="#b8b8b8"/></radialGradient></defs>
<path d="M7.5 15.8 L6.2 18.2 L10.5 16.6Z" fill="#d0d0d0" stroke="#909090" stroke-width=".5"/>
<ellipse cx="12.3" cy="10" rx="7" ry="6.8" fill="url(#bg1)" stroke="#9a9a9a" stroke-width=".6"/>
<text x="9.4" y="14.2" font-family="Liberation Serif" font-weight="bold" font-style="italic" font-size="12.5" fill="#3048b0">?</text></svg>
<svg style="position:absolute;left:45px;top:533px" width="25" height="21" viewBox="0 0 25 21"><path d="M5 3.5 L14.5 3.5 L14.5 17.5 L5 17.5Z" fill="#e4e4dc" stroke="#a8a8a0" stroke-width=".7"/>
<path d="M6.5 7 H12.5 M6.5 9.5 H12.5 M6.5 12 H11 M6.5 14.5 H10" stroke="#b0b0a8" stroke-width=".8"/>
<path d="M10.2 13.6 L17.4 3.6 L19.4 5 L12.4 14.8 L9.8 15.8Z" fill="#d0d0c8" stroke="#a0a098" stroke-width=".6"/></svg>
<svg style="position:absolute;left:80px;top:533px" width="25" height="21" viewBox="0 0 25 21"><rect x="4.2" y="2.6" width="15.4" height="4.2" fill="#58b048"/><path d="M6 2.6V4.6 M8 2.6V4.2 M10 2.6V4.6 M12 2.6V4.2 M14 2.6V4.6 M16 2.6V4.2 M18 2.6V4.6" stroke="#a8e098" stroke-width=".6"/>
<text x="3.4" y="15.2" font-family="Liberation Serif" font-weight="bold" font-style="italic" font-size="10" fill="#101010" letter-spacing="-0.4">0.</text>
<text x="9.6" y="15.2" font-family="Liberation Serif" font-weight="bold" font-style="italic" font-size="10" fill="#283890" letter-spacing="-0.3">00</text>
<rect x="9.8" y="16" width="9" height="1.1" fill="#283890"/></svg>
<svg style="position:absolute;left:115px;top:533px" width="25" height="21" viewBox="0 0 25 21"><rect x="3.6" y="2.2" width="11.6" height="11.2" fill="#e8f4e4" stroke="#388838" stroke-width=".9"/>
<rect x="4.4" y="3" width="6" height="9.6" fill="#48a048"/>
<path d="M5.2 4.2 L9.4 11.2 M9.4 4.2 L5.2 11.2" stroke="#fff" stroke-width="1.5"/>
<path d="M10.8 5 H14.4 M10.8 7.4 H14.4 M10.8 9.8 H14.4" stroke="#68b068" stroke-width=".8"/><circle cx="15.5" cy="12.8" r="4.3" fill="#202c88" stroke="#101850" stroke-width=".5"/><circle cx="14.5" cy="11.4" r="2.6" fill="#4858b8" opacity=".6"/><rect x="14.7" y="12.0" width="1.7" height="3.6" fill="#fff"/><circle cx="15.5" cy="10.5" r="1" fill="#fff"/></svg>
<svg style="position:absolute;left:145px;top:533px" width="25" height="21" viewBox="0 0 25 21"><rect x="3.6" y="2.2" width="11.6" height="11.2" fill="#dce8fc" stroke="#4068d0" stroke-width=".9"/>
<rect x="4.4" y="3" width="7" height="9.6" fill="#4878e0"/>
<path d="M5 4.4 L6.4 11 L7.9 6.2 L9.4 11 L10.8 4.4" stroke="#fff" stroke-width="1.2" fill="none"/>
<path d="M11.8 5 H14.4 M11.8 7.4 H14.4" stroke="#88a8e8" stroke-width=".8"/><circle cx="15.5" cy="12.8" r="4.3" fill="#202c88" stroke="#101850" stroke-width=".5"/><circle cx="14.5" cy="11.4" r="2.6" fill="#4858b8" opacity=".6"/><rect x="14.7" y="12.0" width="1.7" height="3.6" fill="#fff"/><circle cx="15.5" cy="10.5" r="1" fill="#fff"/></svg>
<div style="position:absolute;left:409px;top:331px;width:791px;height:569px;background:#f0f0f0"></div>
<div style="position:absolute;left:409px;top:329px;width:791px;height:1px;background:#cfcfcf"></div>
<div style="position:absolute;left:409px;top:330px;width:791px;height:1px;background:#686868"></div>
<div style="position:absolute;left:409px;top:331px;width:791px;height:30px;background:#fff"></div>
<span class="t" style="left:417px;top:338.0px;font-size:12px;line-height:16px;color:#000;font-weight:normal;letter-spacing:-0.160px;">Edit Load Cases and Combinations</span>
<div style="position:absolute;left:415px;top:388px;width:790px;height:520px;background:#fff;border:1px solid #dcdcdc"></div>
<div style="position:absolute;left:485px;top:370px;width:44px;height:17px;background:#f0f0f0;border:1px solid #d9d9d9;border-bottom:none"></div>
<span class="t" style="left:490px;top:373.0px;font-size:11px;line-height:14px;color:#000;font-weight:normal;letter-spacing:-0.297px;">Actions</span>
<div style="position:absolute;left:530px;top:370px;width:130px;height:17px;background:#f0f0f0;border:1px solid #d9d9d9;border-bottom:none"></div>
<span class="t" style="left:537px;top:373.0px;font-size:11px;line-height:14px;color:#000;font-weight:normal;letter-spacing:-0.293px;">Combination Expressions</span>
<div style="position:absolute;left:661px;top:370px;width:108px;height:17px;background:#f0f0f0;border:1px solid #d9d9d9;border-bottom:none"></div>
<span class="t" style="left:668px;top:373.0px;font-size:11px;line-height:14px;color:#000;font-weight:normal;letter-spacing:-0.257px;">Action Combinations</span>
<div style="position:absolute;left:770px;top:370px;width:101px;height:17px;background:#f0f0f0;border:1px solid #d9d9d9;border-bottom:none"></div>
<span class="t" style="left:776px;top:373.0px;font-size:11px;line-height:14px;color:#000;font-weight:normal;letter-spacing:-0.300px;transform:scaleX(0.9978);transform-origin:0 50%;">Load Combinations</span>
<div style="position:absolute;left:872px;top:370px;width:107px;height:17px;background:#f0f0f0;border:1px solid #d9d9d9;border-bottom:none"></div>
<span class="t" style="left:878px;top:373.0px;font-size:11px;line-height:14px;color:#000;font-weight:normal;letter-spacing:-0.263px;">Result Combinations</span>
<div style="position:absolute;left:415px;top:368px;width:69px;height:21px;background:#fff;border:1px solid #d9d9d9;border-bottom:none"></div>
<span class="t" style="left:422px;top:370.7px;font-size:11px;line-height:14px;color:#000;font-weight:normal;letter-spacing:-0.300px;transform:scaleX(0.9871);transform-origin:0 50%;">Load Cases</span>
<div style="position:absolute;left:424px;top:398px;width:269px;height:16px;background:#dce6f4;clip-path:polygon(0 0,259px 0,269px 10px,269px 16px,0 16px)"></div>
<div style="position:absolute;left:424px;top:414px;width:267px;height:495px;background:#f1f5fa;border-left:1px solid #dce6f4;border-right:1px solid #a8a8f2;border-bottom:1px solid #a8a8f2"></div>
<div style="position:absolute;left:692px;top:408px;width:1px;height:6px;background:#a8a8f2"></div>
<span class="t" style="left:426px;top:399.0px;font-size:11px;line-height:14px;color:#1c3a78;font-weight:normal;letter-spacing:-0.146px;">Existing Load Cases</span>
<div style="position:absolute;left:424px;top:414px;width:267px;height:490px;background:#fff;border-top:1px solid #7a7a7a;border-left:1px solid #9a9a9a"></div>
<div style="position:absolute;left:425px;top:472px;width:267px;height:19px;background:#0078d7"></div>
<div style="position:absolute;left:426px;top:419.0px;width:25px;height:11px;background:#000"></div>
<span class="t" style="left:426px;top:417.8px;font-size:9.3px;line-height:14px;color:#fff;font-weight:bold;width:25px;text-align:center;letter-spacing:0.25px;transform:scaleX(1.08);transform-origin:50% 50%;">G</span>
<span class="t" style="left:454px;top:417.5px;font-size:11px;line-height:14px;color:#000;font-weight:normal;letter-spacing:-0.300px;transform:scaleX(0.9592);transform-origin:0 50%;">LC1</span>
<span class="t" style="left:505.5px;top:417.5px;font-size:11px;line-height:14px;color:#000;font-weight:normal;letter-spacing:-0.126px;">Dead Weight</span>
<div style="position:absolute;left:426px;top:438.0px;width:25px;height:11px;background:#9bbb59"></div>
<span class="t" style="left:426px;top:436.8px;font-size:9.3px;line-height:14px;color:#1a1a1a;font-weight:normal;width:25px;text-align:center;letter-spacing:0.25px;transform:scaleX(1.08);transform-origin:50% 50%;">Qs</span>
<span class="t" style="left:454px;top:436.5px;font-size:11px;line-height:14px;color:#000;font-weight:normal;letter-spacing:-0.300px;transform:scaleX(0.9592);transform-origin:0 50%;">LC2</span>
<span class="t" style="left:505.5px;top:436.5px;font-size:11px;line-height:14px;color:#000;font-weight:normal;letter-spacing:-0.300px;transform:scaleX(0.9684);transform-origin:0 50%;">Snow</span>
<div style="position:absolute;left:426px;top:457.0px;width:25px;height:11px;background:#12b04c"></div>
<span class="t" style="left:426px;top:455.8px;font-size:9.3px;line-height:14px;color:#fff;font-weight:normal;width:25px;text-align:center;letter-spacing:0.25px;transform:scaleX(1.08);transform-origin:50% 50%;">Qw</span>
<span class="t" style="left:454px;top:455.5px;font-size:11px;line-height:14px;color:#000;font-weight:normal;letter-spacing:-0.300px;transform:scaleX(0.9592);transform-origin:0 50%;">LC3</span>
<span class="t" style="left:505.5px;top:455.5px;font-size:11px;line-height:14px;color:#000;font-weight:normal;letter-spacing:-0.266px;">Wind</span>
<div style="position:absolute;left:426px;top:476.0px;width:25px;height:11px;background:#d9776c"></div>
<span class="t" style="left:426px;top:474.8px;font-size:9.3px;line-height:14px;color:#fff;font-weight:normal;width:25px;text-align:center;letter-spacing:0.25px;transform:scaleX(1.08);transform-origin:50% 50%;">Q Cr</span>
<span class="t" style="left:454px;top:474.5px;font-size:11px;line-height:14px;color:#fff;font-weight:normal;letter-spacing:-0.300px;transform:scaleX(0.9592);transform-origin:0 50%;">LC4</span>
<span class="t" style="left:505.5px;top:474.5px;font-size:11px;line-height:14px;color:#fff;font-weight:normal;letter-spacing:-0.194px;">Crane</span>
<div style="position:absolute;left:501px;top:415px;width:1px;height:489px;background:#000"></div>
<div style="position:absolute;left:502px;top:415px;width:1px;height:489px;background:rgba(0,0,0,.35)"></div>
<div style="position:absolute;left:501px;top:472px;width:2px;height:19px;background:#fff"></div>
<div style="position:absolute;left:701px;top:398px;width:98px;height:16px;background:#dce6f4;clip-path:polygon(0 0,88px 0,98px 10px,98px 16px,0 16px)"></div>
<div style="position:absolute;left:701px;top:414px;width:96px;height:29px;background:#f1f5fa;border-left:1px solid #dce6f4;border-right:1px solid #a8a8f2;border-bottom:1px solid #a8a8f2"></div>
<div style="position:absolute;left:798px;top:408px;width:1px;height:6px;background:#a8a8f2"></div>
<span class="t" style="left:703.5px;top:399.0px;font-size:11px;line-height:14px;color:#1c3a78;font-weight:normal;letter-spacing:-0.300px;transform:scaleX(0.9553);transform-origin:0 50%;">LC No.</span>
<div style="position:absolute;left:704px;top:418px;width:43px;height:18px;background:#fff;border:1px solid #7a7a7a"></div>
<span class="t" style="left:737.5px;top:421.0px;font-size:11px;line-height:14px;color:#000;font-weight:normal;">4</span>
<div style="position:absolute;left:806px;top:398px;width:389px;height:16px;background:#dce6f4;clip-path:polygon(0 0,379px 0,389px 10px,389px 16px,0 16px)"></div>
<div style="position:absolute;left:806px;top:414px;width:387px;height:29px;background:#f1f5fa;border-left:1px solid #dce6f4;border-right:1px solid #a8a8f2;border-bottom:1px solid #a8a8f2"></div>
<div style="position:absolute;left:1194px;top:408px;width:1px;height:6px;background:#a8a8f2"></div>
<span class="t" style="left:808px;top:399.0px;font-size:11px;line-height:14px;color:#1c3a78;font-weight:normal;letter-spacing:-0.133px;">Load Case Description</span>
<div style="position:absolute;left:809px;top:418px;width:379px;height:19px;background:#fff;border:1px solid #7a7a7a"></div>
<span class="t" style="left:815px;top:421.0px;font-size:11px;line-height:14px;color:#000;font-weight:normal;letter-spacing:-0.294px;">Crane</span>
<svg style="position:absolute;left:1175px;top:425px" width="11" height="7" viewBox="0 0 11 7"><path d="M0.8 1 L5.5 5.6 L10.2 1" stroke="#444" stroke-width="1" fill="none"/></svg>
<div style="position:absolute;left:701px;top:472px;width:520px;height:440px;background:#fff;border:1px solid #dcdcdc;border-left:1px solid #6a6a6a"></div>
<div style="position:absolute;left:753px;top:454px;width:117px;height:17px;background:#f0f0f0;border:1px solid #d9d9d9;border-bottom:none"></div>
<span class="t" style="left:757.5px;top:457.0px;font-size:11px;line-height:14px;color:#000;font-weight:normal;letter-spacing:-0.197px;">Calculation Parameters</span>
<div style="position:absolute;left:701px;top:452px;width:51px;height:21px;background:#fff;border:1px solid #d9d9d9;border-bottom:none"></div>
<span class="t" style="left:709px;top:455.5px;font-size:11px;line-height:14px;color:#000;font-weight:normal;letter-spacing:-0.300px;transform:scaleX(0.9719);transform-origin:0 50%;">General</span>
<div style="position:absolute;left:707px;top:482px;width:487px;height:16px;background:#dce6f4;clip-path:polygon(0 0,477px 0,487px 10px,487px 16px,0 16px)"></div>
<div style="position:absolute;left:707px;top:498px;width:485px;height:29px;background:#f1f5fa;border-left:1px solid #dce6f4;border-right:1px solid #a8a8f2;border-bottom:1px solid #a8a8f2"></div>
<div style="position:absolute;left:1193px;top:492px;width:1px;height:6px;background:#a8a8f2"></div>
<span class="t" style="left:709.5px;top:483.0px;font-size:11px;line-height:14px;color:#1c3a78;font-weight:normal;letter-spacing:-0.051px;">Action Category</span>
<span class="t" style="left:1019px;top:483.0px;font-size:11px;line-height:14px;color:#1c3a78;font-weight:normal;letter-spacing:-0.300px;transform:scaleX(0.9982);transform-origin:0 50%;">EN 1990 + EN 1991-3; Cranes | CEN</span>
<div style="position:absolute;left:707px;top:537px;width:313px;height:16px;background:#dce6f4;clip-path:polygon(0 0,303px 0,313px 10px,313px 16px,0 16px)"></div>
<div style="position:absolute;left:707px;top:553px;width:311px;height:136px;background:#f1f5fa;border-left:1px solid #dce6f4;border-right:1px solid #a8a8f2;border-bottom:1px solid #a8a8f2"></div>
<div style="position:absolute;left:1019px;top:547px;width:1px;height:6px;background:#a8a8f2"></div>
<div style="position:absolute;left:1027px;top:537px;width:190px;height:152px;background:#f1f5fa;border-left:1px solid #dce6f4;border-top:1px solid #dce6f4;border-bottom:1px solid #a8a8f2"></div>
<div style="position:absolute;left:707px;top:698px;width:313px;height:16px;background:#dce6f4;clip-path:polygon(0 0,303px 0,313px 10px,313px 16px,0 16px)"></div>
<div style="position:absolute;left:707px;top:714px;width:311px;height:195px;background:#f1f5fa;border-left:1px solid #dce6f4;border-right:1px solid #a8a8f2;border-bottom:1px solid #a8a8f2"></div>
<div style="position:absolute;left:1019px;top:708px;width:1px;height:6px;background:#a8a8f2"></div>
<div style="position:absolute;left:1027px;top:698px;width:203px;height:16px;background:#dce6f4;clip-path:polygon(0 0,193px 0,203px 10px,203px 16px,0 16px)"></div>
<div style="position:absolute;left:1027px;top:714px;width:201px;height:195px;background:#f1f5fa;border-left:1px solid #dce6f4;border-right:1px solid #a8a8f2;border-bottom:1px solid #a8a8f2"></div>
<div style="position:absolute;left:1229px;top:708px;width:1px;height:6px;background:#a8a8f2"></div>
<div style="position:absolute;left:710px;top:502px;width:478px;height:19px;background:#fff;border:1px solid #0078d7"></div>
<div style="position:absolute;left:1173px;top:502px;width:15px;height:19px;background:#cce4f7;border:1px solid #00569c"></div>
<svg style="position:absolute;left:1176.4px;top:509.8px" width="10" height="7" viewBox="0 0 10 7"><path d="M0.8 1 L5 5.2 L9.2 1" stroke="#333" stroke-width="1.1" fill="none"/></svg>
<div style="position:absolute;left:714px;top:507px;width:25px;height:11px;background:#d4746c"></div>
<span class="t" style="left:714px;top:506.29999999999995px;font-size:9.3px;line-height:14px;color:#fff;font-weight:normal;width:25px;text-align:center;letter-spacing:0.25px;transform:scaleX(1.08);transform-origin:50% 50%;">Q Cr</span>
<span class="t" style="left:740.5px;top:506.0px;font-size:11px;line-height:14px;color:#000;font-weight:normal;letter-spacing:-0.060px;">Imposed from Cranes - category A: Class 1-7</span>
<div style="position:absolute;left:710px;top:523px;width:478px;height:361px;background:#fff;border:1px solid #0078d7;box-shadow:2px 3px 3px rgba(0,0,0,.5)"></div>
<div style="position:absolute;left:715px;top:526.3px;width:25px;height:11px;background:#000"></div>
<span class="t" style="left:715px;top:525.0999999999999px;font-size:9.3px;line-height:14px;color:#fff;font-weight:bold;width:25px;text-align:center;letter-spacing:0.25px;transform:scaleX(1.08);transform-origin:50% 50%;">G</span>
<span class="t" style="left:742.4px;top:524.8px;font-size:11px;line-height:14px;color:#000;font-weight:normal;letter-spacing:-0.168px;">Permanent</span>
<span class="t" style="left:1053px;top:524.8px;font-size:11px;line-height:14px;color:#000;font-weight:normal;">1.A</span>
<div style="position:absolute;left:715px;top:541.3px;width:25px;height:11px;background:#1c1418"></div>
<span class="t" style="left:715px;top:540.0999999999999px;font-size:9.3px;line-height:14px;color:#fff;font-weight:bold;width:25px;text-align:center;letter-spacing:0.25px;transform:scaleX(1.08);transform-origin:50% 50%;">G Cr</span>
<span class="t" style="left:742.4px;top:539.8px;font-size:11px;line-height:14px;color:#000;font-weight:normal;letter-spacing:-0.161px;">Permanent from Cranes</span>
<span class="t" style="left:1053px;top:539.8px;font-size:11px;line-height:14px;color:#000;font-weight:normal;">1.B</span>
<div style="position:absolute;left:715px;top:556.3px;width:25px;height:11px;background:#c9a10a"></div>
<span class="t" style="left:715px;top:555.0999999999999px;font-size:9.3px;line-height:14px;color:#fff;font-weight:normal;width:25px;text-align:center;letter-spacing:0.25px;transform:scaleX(1.08);transform-origin:50% 50%;">P</span>
<span class="t" style="left:742.4px;top:554.8px;font-size:11px;line-height:14px;color:#000;font-weight:normal;letter-spacing:-0.152px;">Prestress</span>
<span class="t" style="left:1053px;top:554.8px;font-size:11px;line-height:14px;color:#000;font-weight:normal;">2</span>
<div style="position:absolute;left:711px;top:569px;width:476px;height:13px;background:#0078d7;border:1px solid #ff9a3c"></div>
<div style="position:absolute;left:711px;top:569px;width:476px;height:13px;border:1px dotted #000"></div>
<div style="position:absolute;left:715px;top:571.3px;width:25px;height:11px;background:#d4746c"></div>
<span class="t" style="left:715px;top:570.0999999999999px;font-size:9.3px;line-height:14px;color:#fff;font-weight:normal;width:25px;text-align:center;letter-spacing:0.25px;transform:scaleX(1.08);transform-origin:50% 50%;">Q Cr</span>
<span class="t" style="left:742.4px;top:569.8px;font-size:11px;line-height:14px;color:#fff;font-weight:normal;letter-spacing:-0.046px;">Imposed from Cranes - category A: Class 1-7</span>
<span class="t" style="left:1053px;top:569.8px;font-size:11px;line-height:14px;color:#fff;font-weight:normal;">3.A</span>
<div style="position:absolute;left:715px;top:586.3px;width:25px;height:11px;background:#cc5c58"></div>
<span class="t" style="left:715px;top:585.0999999999999px;font-size:9.3px;line-height:14px;color:#fff;font-weight:normal;width:25px;text-align:center;letter-spacing:0.25px;transform:scaleX(1.08);transform-origin:50% 50%;">Q Cr</span>
<span class="t" style="left:742.4px;top:584.8px;font-size:11px;line-height:14px;color:#000;font-weight:normal;letter-spacing:-0.108px;">Imposed from Cranes - category B: Class 8</span>
<span class="t" style="left:1053px;top:584.8px;font-size:11px;line-height:14px;color:#000;font-weight:normal;">3.B</span>
<div style="position:absolute;left:715px;top:601.3px;width:25px;height:11px;background:#a83838"></div>
<span class="t" style="left:715px;top:600.0999999999999px;font-size:9.3px;line-height:14px;color:#fff;font-weight:normal;width:25px;text-align:center;letter-spacing:0.25px;transform:scaleX(1.08);transform-origin:50% 50%;">Q Cr</span>
<span class="t" style="left:742.4px;top:599.8px;font-size:11px;line-height:14px;color:#000;font-weight:normal;letter-spacing:-0.086px;">Imposed from Cranes - category C: Class 9, 10</span>
<span class="t" style="left:1053px;top:599.8px;font-size:11px;line-height:14px;color:#000;font-weight:normal;">3.C</span>
<div style="position:absolute;left:715px;top:616.3px;width:25px;height:11px;background:#802828"></div>
<span class="t" style="left:715px;top:615.0999999999999px;font-size:9.3px;line-height:14px;color:#fff;font-weight:normal;width:25px;text-align:center;letter-spacing:0.25px;transform:scaleX(1.08);transform-origin:50% 50%;">Q Cr</span>
<span class="t" style="left:742.4px;top:614.8px;font-size:11px;line-height:14px;color:#000;font-weight:normal;letter-spacing:-0.052px;">Imposed from Cranes - category D: Class 11, 12, 13</span>
<span class="t" style="left:1053px;top:614.8px;font-size:11px;line-height:14px;color:#000;font-weight:normal;">3.D</span>
<div style="position:absolute;left:715px;top:631.3px;width:25px;height:11px;background:#5c1c1c"></div>
<span class="t" style="left:715px;top:630.0999999999999px;font-size:9.3px;line-height:14px;color:#fff;font-weight:normal;width:25px;text-align:center;letter-spacing:0.25px;transform:scaleX(1.08);transform-origin:50% 50%;">Q Cr</span>
<span class="t" style="left:742.4px;top:629.8px;font-size:11px;line-height:14px;color:#000;font-weight:normal;letter-spacing:-0.077px;">Imposed from Cranes - Support forces</span>
<span class="t" style="left:1053px;top:629.8px;font-size:11px;line-height:14px;color:#000;font-weight:normal;">3.E</span>
<div style="position:absolute;left:715px;top:646.3px;width:25px;height:11px;background:#c8544f"></div>
<span class="t" style="left:715px;top:645.0999999999999px;font-size:9.3px;line-height:14px;color:#fff;font-weight:normal;width:25px;text-align:center;letter-spacing:0.25px;transform:scaleX(1.08);transform-origin:50% 50%;">Qi A</span>
<span class="t" style="left:742.4px;top:644.8px;font-size:11px;line-height:14px;color:#000;font-weight:normal;letter-spacing:-0.062px;">Imposed - Category A: domestic, residential areas</span>
<span class="t" style="left:1053px;top:644.8px;font-size:11px;line-height:14px;color:#000;font-weight:normal;">4.A</span>
<div style="position:absolute;left:715px;top:661.3px;width:25px;height:11px;background:#c8544f"></div>
<span class="t" style="left:715px;top:660.0999999999999px;font-size:9.3px;line-height:14px;color:#fff;font-weight:normal;width:25px;text-align:center;letter-spacing:0.25px;transform:scaleX(1.08);transform-origin:50% 50%;">Qi B</span>
<span class="t" style="left:742.4px;top:659.8px;font-size:11px;line-height:14px;color:#000;font-weight:normal;letter-spacing:-0.020px;">Imposed - Category B: office areas</span>
<span class="t" style="left:1053px;top:659.8px;font-size:11px;line-height:14px;color:#000;font-weight:normal;">4.B</span>
<div style="position:absolute;left:715px;top:676.3px;width:25px;height:11px;background:#c8544f"></div>
<span class="t" style="left:715px;top:675.0999999999999px;font-size:9.3px;line-height:14px;color:#fff;font-weight:normal;width:25px;text-align:center;letter-spacing:0.25px;transform:scaleX(1.08);transform-origin:50% 50%;">Qi C</span>
<span class="t" style="left:742.4px;top:674.8px;font-size:11px;line-height:14px;color:#000;font-weight:normal;letter-spacing:-0.035px;">Imposed - Category C: congregation areas</span>
<span class="t" style="left:1053px;top:674.8px;font-size:11px;line-height:14px;color:#000;font-weight:normal;">4.C</span>
<div style="position:absolute;left:715px;top:691.3px;width:25px;height:11px;background:#c8544f"></div>
<span class="t" style="left:715px;top:690.0999999999999px;font-size:9.3px;line-height:14px;color:#fff;font-weight:normal;width:25px;text-align:center;letter-spacing:0.25px;transform:scaleX(1.08);transform-origin:50% 50%;">Qi D</span>
<span class="t" style="left:742.4px;top:689.8px;font-size:11px;line-height:14px;color:#000;font-weight:normal;letter-spacing:-0.082px;">Imposed - Category D: shopping areas</span>
<span class="t" style="left:1053px;top:689.8px;font-size:11px;line-height:14px;color:#000;font-weight:normal;">4.D</span>
<div style="position:absolute;left:715px;top:706.3px;width:25px;height:11px;background:#c8544f"></div>
<span class="t" style="left:715px;top:705.0999999999999px;font-size:9.3px;line-height:14px;color:#fff;font-weight:normal;width:25px;text-align:center;letter-spacing:0.25px;transform:scaleX(1.08);transform-origin:50% 50%;">Qi E</span>
<span class="t" style="left:742.4px;top:704.8px;font-size:11px;line-height:14px;color:#000;font-weight:normal;letter-spacing:-0.054px;">Imposed - Category E: storage areas</span>
<span class="t" style="left:1053px;top:704.8px;font-size:11px;line-height:14px;color:#000;font-weight:normal;">4.E</span>
<div style="position:absolute;left:715px;top:721.3px;width:25px;height:11px;background:#c8544f"></div>
<span class="t" style="left:715px;top:720.0999999999999px;font-size:9.3px;line-height:14px;color:#fff;font-weight:normal;width:25px;text-align:center;letter-spacing:0.25px;transform:scaleX(1.08);transform-origin:50% 50%;">Qi F</span>
<span class="t" style="left:742.4px;top:719.8px;font-size:11px;line-height:14px;color:#000;font-weight:normal;letter-spacing:-0.010px;">Imposed - Category F: traffic area - vehicle weight ≤ 30 kN</span>
<span class="t" style="left:1053px;top:719.8px;font-size:11px;line-height:14px;color:#000;font-weight:normal;">4.F</span>
<div style="position:absolute;left:715px;top:736.3px;width:25px;height:11px;background:#c8544f"></div>
<span class="t" style="left:715px;top:735.0999999999999px;font-size:9.3px;line-height:14px;color:#fff;font-weight:normal;width:25px;text-align:center;letter-spacing:0.25px;transform:scaleX(1.08);transform-origin:50% 50%;">Qi G</span>
<span class="t" style="left:742.4px;top:734.8px;font-size:11px;line-height:14px;color:#000;font-weight:normal;letter-spacing:-0.033px;">Imposed - Category G: traffic area - vehicle weight ≤ 160 kN</span>
<span class="t" style="left:1053px;top:734.8px;font-size:11px;line-height:14px;color:#000;font-weight:normal;">4.G</span>
<div style="position:absolute;left:715px;top:751.3px;width:25px;height:11px;background:#c8544f"></div>
<span class="t" style="left:715px;top:750.0999999999999px;font-size:9.3px;line-height:14px;color:#fff;font-weight:normal;width:25px;text-align:center;letter-spacing:0.25px;transform:scaleX(1.08);transform-origin:50% 50%;">Qi H</span>
<span class="t" style="left:742.4px;top:749.8px;font-size:11px;line-height:14px;color:#000;font-weight:normal;letter-spacing:0.012px;">Imposed - Category H: roofs</span>
<span class="t" style="left:1053px;top:749.8px;font-size:11px;line-height:14px;color:#000;font-weight:normal;">4.H</span>
<div style="position:absolute;left:715px;top:766.3px;width:25px;height:11px;background:#9bbb59"></div>
<span class="t" style="left:715px;top:765.0999999999999px;font-size:9.3px;line-height:14px;color:#1a1a1a;font-weight:normal;width:25px;text-align:center;letter-spacing:0.25px;transform:scaleX(1.08);transform-origin:50% 50%;">Qs</span>
<span class="t" style="left:742.4px;top:764.8px;font-size:11px;line-height:14px;color:#000;font-weight:normal;letter-spacing:-0.062px;">Snow (Finland, Iceland, Norway, Sweden)</span>
<span class="t" style="left:1053px;top:764.8px;font-size:11px;line-height:14px;color:#000;font-weight:normal;">5.A</span>
<div style="position:absolute;left:715px;top:781.3px;width:25px;height:11px;background:#9bbb59"></div>
<span class="t" style="left:715px;top:780.0999999999999px;font-size:9.3px;line-height:14px;color:#1a1a1a;font-weight:normal;width:25px;text-align:center;letter-spacing:0.25px;transform:scaleX(1.08);transform-origin:50% 50%;">Qs</span>
<span class="t" style="left:742.4px;top:779.8px;font-size:11px;line-height:14px;color:#000;font-weight:normal;letter-spacing:-0.007px;">Snow (H &gt; 1000 m a.s.l.)</span>
<span class="t" style="left:1053px;top:779.8px;font-size:11px;line-height:14px;color:#000;font-weight:normal;">5.B</span>
<div style="position:absolute;left:715px;top:796.3px;width:25px;height:11px;background:#9bbb59"></div>
<span class="t" style="left:715px;top:795.0999999999999px;font-size:9.3px;line-height:14px;color:#1a1a1a;font-weight:normal;width:25px;text-align:center;letter-spacing:0.25px;transform:scaleX(1.08);transform-origin:50% 50%;">Qs</span>
<span class="t" style="left:742.4px;top:794.8px;font-size:11px;line-height:14px;color:#000;font-weight:normal;letter-spacing:-0.065px;">Snow (H ≤ 1000 m a.s.l.)</span>
<span class="t" style="left:1053px;top:794.8px;font-size:11px;line-height:14px;color:#000;font-weight:normal;">5.C</span>
<div style="position:absolute;left:715px;top:811.3px;width:25px;height:11px;background:#12b04c"></div>
<span class="t" style="left:715px;top:810.0999999999999px;font-size:9.3px;line-height:14px;color:#fff;font-weight:normal;width:25px;text-align:center;letter-spacing:0.25px;transform:scaleX(1.08);transform-origin:50% 50%;">Qw</span>
<span class="t" style="left:742.4px;top:809.8px;font-size:11px;line-height:14px;color:#000;font-weight:normal;letter-spacing:-0.300px;transform:scaleX(0.9806);transform-origin:0 50%;">Wind</span>
<span class="t" style="left:1053px;top:809.8px;font-size:11px;line-height:14px;color:#000;font-weight:normal;">6</span>
<div style="position:absolute;left:715px;top:826.3px;width:25px;height:11px;background:#d63a26"></div>
<span class="t" style="left:715px;top:825.0999999999999px;font-size:9.3px;line-height:14px;color:#fff;font-weight:normal;width:25px;text-align:center;letter-spacing:0.25px;transform:scaleX(1.08);transform-origin:50% 50%;">Qt</span>
<span class="t" style="left:742.4px;top:824.8px;font-size:11px;line-height:14px;color:#000;font-weight:normal;letter-spacing:0.053px;">Temperature (non fire)</span>
<span class="t" style="left:1053px;top:824.8px;font-size:11px;line-height:14px;color:#000;font-weight:normal;">7</span>
<div style="position:absolute;left:715px;top:841.3px;width:25px;height:11px;background:#4bacc6"></div>
<span class="t" style="left:715px;top:840.0999999999999px;font-size:9.3px;line-height:14px;color:#fff;font-weight:normal;width:25px;text-align:center;letter-spacing:0.25px;transform:scaleX(1.08);transform-origin:50% 50%;">A</span>
<span class="t" style="left:742.4px;top:839.8px;font-size:11px;line-height:14px;color:#000;font-weight:normal;letter-spacing:-0.207px;">Accidental</span>
<span class="t" style="left:1053px;top:839.8px;font-size:11px;line-height:14px;color:#000;font-weight:normal;">8</span>
<div style="position:absolute;left:715px;top:856.3px;width:25px;height:11px;background:#9c5a20"></div>
<span class="t" style="left:715px;top:855.0999999999999px;font-size:9.3px;line-height:14px;color:#fff;font-weight:normal;width:25px;text-align:center;letter-spacing:0.25px;transform:scaleX(1.08);transform-origin:50% 50%;">AE</span>
<span class="t" style="left:742.4px;top:854.8px;font-size:11px;line-height:14px;color:#000;font-weight:normal;letter-spacing:-0.177px;">Earthquake</span>
<span class="t" style="left:1053px;top:854.8px;font-size:11px;line-height:14px;color:#000;font-weight:normal;">9</span>
<div style="position:absolute;left:715px;top:871.3px;width:25px;height:11px;background:#1f3f96"></div>
<span class="t" style="left:715px;top:870.0999999999999px;font-size:9.3px;line-height:14px;color:#fff;font-weight:normal;width:25px;text-align:center;letter-spacing:0.25px;transform:scaleX(1.08);transform-origin:50% 50%;">Imp</span>
<span class="t" style="left:742.4px;top:869.8px;font-size:11px;line-height:14px;color:#000;font-weight:normal;letter-spacing:0.014px;">Imperfection</span>
<div style="position:absolute;left:703px;top:566px;width:425px;height:77px;border:2px solid #b80000"></div>
<svg style="position:absolute;left:1160.7px;top:578.5px" width="14" height="21" viewBox="0 0 14 21"><path d="M1 1 L1 17 L4.8 13.4 L7.6 19.6 L10 18.5 L7.2 12.4 L12.2 12.4 Z" fill="#fff" stroke="#000" stroke-width="1" stroke-linejoin="miter"/></svg>
</body></html>
